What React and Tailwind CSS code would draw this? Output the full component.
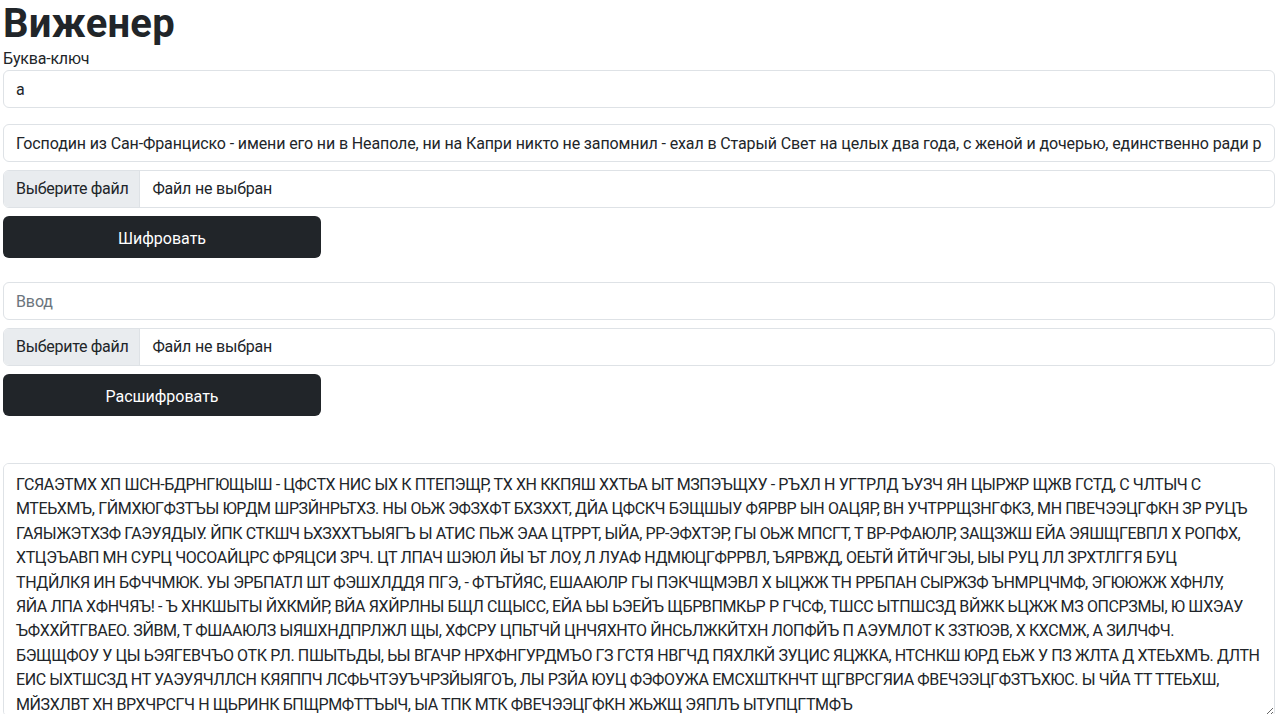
const plain =
  "Господин из Сан-Франциско - имени его ни в Неаполе, ни на Капри никто не запомнил - ехал в Старый Свет на целых два года, с женой и дочерью, единственно ради развлечения.";

const cipher =
  "ГСЯАЭТМХ ХП ШСН-БДРНГЮЩЫШ - ЦФСТХ НИС ЫХ К ПТЕПЭЩР, ТХ ХН ККПЯШ ХХТЬА ЫТ МЗПЭЪЩХУ - РЪХЛ Н УГТРЛД ЪУЗЧ ЯН ЦЫРЖР ЩЖВ ГСТД, С ЧЛТЫЧ С " +
  "МТЕЬХМЪ, ГЙМХЮГФЗТЪЫ ЮРДМ ШРЗЙНРЬТХЗ. НЫ ОЬЖ ЭФЗХФТ БХЗХХТ, ДЙА ЦФСКЧ БЭЩШЫУ ФЯРВР ЫН ОАЦЯР, ВН УЧТРРЩЗНГФКЗ, МН ПВЕЧЭЭЦГФКН ЗР РУЦЪ " +
  "ГАЯЫЖЭТХЗФ ГАЭУЯДЫУ. ЙПК СТКШЧ ЬХЗХХТЪЫЯГЪ Ы АТИС ПЬЖ ЭАА ЦТРРТ, ЫЙА, РР-ЭФХТЭР, ГЫ ОЬЖ МПСГТ, Т ВР-РФАЮЛР, ЗАЩЗЖШ ЕЙА ЭЯШЩГЕВПЛ Х РОПФХ, " +
  "ХТЦЭЪАВП МН СУРЦ ЧОСОАЙЦРС ФРЯЦСИ ЗРЧ. ЦТ ЛПАЧ ШЭЮЛ ЙЫ ЪТ ЛОУ, Л ЛУАФ НДМЮЦГФРРВЛ, ЪЯРВЖД, ОЕЬТЙ ЙТЙЧГЭЫ, ЫЫ РУЦ ЛЛ ЗРХТЛГГЯ БУЦ\n" +
  "ТНДЙЛКЯ ИН БФЧЧМЮК. УЫ ЭРБПАТЛ ШТ ФЭШХЛДДЯ ПГЭ, - ФТЪТЙЯС, ЕШААЮЛР ГЫ ПЭКЧЩМЭВЛ Х ЫЦЖЖ ТН РРБПАН СЫРЖЗФ ЪНМРЦЧМФ, ЭГЮЮЖЖ ХФНЛУ,\n" +
  "ЯЙА ЛПА ХФНЧЯЪ! - Ъ ХНКШЫТЫ ЙХКМЙР, ВЙА ЯХЙРЛНЫ БЩЛ СЩЫСС, ЕЙА ЬЫ ЬЭЕЙЪ ЩБРВПМКЬР Р ГЧСФ, ТШСС ЫТПШСЗД ВЙЖК ЬЦЖЖ МЗ ОПСРЗМЫ, Ю ШХЭАУ " +
  "ЪФХХЙТГВАЕО. ЗЙВМ, Т ФШААЮЛЗ ЫЯШХНДПРЛЖЛ ЩЫ, ХФСРУ ЦПЬТЧЙ ЦНЧЯХНТО ЙНСЬЛЖКЙТХН ЛОПФЙЪ П АЭУМЛОТ К ЗЗТЮЭВ, Х КХСМЖ, А ЗИЛЧФЧ.\n" +
  "БЭЩЩФОУ У ЦЫ ЬЭЯГЕВЧЪО ОТК РЛ. ПШЫТЬДЫ, ЬЫ ВГАЧР НРХФНГУРДМЪО ГЗ ГСТЯ НВГЧД ПЯХЛКЙ ЗУЦИС ЯЦЖКА, НТСНКШ ЮРД ЕЬЖ У ПЗ ЖЛТА Д ХТЕЬХМЪ. ДЛТН " +
  "ЕИС ЫХТШСЗД НТ УАЭУЯЧЛЛСН КЯЯППЧ ЛСФЬЧТЭУЪЧРЗЙЫЯГОЪ, ЛЫ РЗЙА ЮУЦ ФЭФОУЖА ЕМСХШТКНЧТ ЩГВРСГЯИА ФВЕЧЭЭЦГФЗТЪХЮС. Ы ЧЙА ТТ ТТЕЬХШ,\n" +
  "МЙЗХЛВТ ХН ВРХЧРСГЧ Н ЩЬРИНК БПЩРМФТТЪЫЧ, ЫА ТПК МТК ФВЕЧЭЭЦГФКН ЖЬЖЩ ЭЯПЛЪ ЫТУПЦГТМФЪ";

function FileInput() {
  return (
    <div className="flex h-[38px] rounded-md border border-[#dee2e6] overflow-hidden bg-white">
      <div className="flex items-center pl-3 pr-[11px] bg-[#e9ecef] border-r border-[#dee2e6] tracking-[-0.3px]">Выберите файл</div>
      <div className="flex items-center px-3 tracking-[-0.2px]">Файл не выбран</div>
    </div>
  );
}

function TextInput({ value, placeholder }) {
  return (
    <input
      type="text"
      defaultValue={value}
      placeholder={placeholder}
      className="block w-full h-[38px] px-3 rounded-md border border-[#dee2e6] bg-white text-[#212529] tracking-[-0.12px] placeholder:text-[#6c757d] outline-none"
    />
  );
}

export default function App() {
  return (
    <div className="px-[3px] bg-white text-[#212529] text-base font-['Segoe_UI',Roboto,'Noto_Sans',sans-serif]">
      <h1 className="text-[40px] font-bold leading-[48px] tracking-[0.2px]">Виженер</h1>
      <label className="block leading-[22px] tracking-[-0.2px]">Буква-ключ</label>
      <TextInput value="а" />

      {/* Encrypt */}
      <div className="mt-4">
        <TextInput value={plain} />
      </div>
      <div className="mt-2">
        <FileInput />
      </div>
      <button className="mt-2 w-1/4 h-[42px] pt-1 rounded-md bg-[#212529] text-white">Шифровать</button>

      {/* Decrypt */}
      <div className="mt-6">
        <TextInput placeholder="Ввод" />
      </div>
      <div className="mt-2">
        <FileInput />
      </div>
      <button className="mt-2 w-1/4 h-[42px] pt-1 rounded-md bg-[#212529] text-white">Расшифровать</button>

      {/* Result */}
      <textarea
        readOnly
        defaultValue={cipher}
        className="block mt-[47px] w-full h-[254px] px-3 pt-[9px] pb-[6px] rounded-md border border-[#dee2e6] bg-white text-[#212529] leading-[24.4px] tracking-[-0.38px] outline-none"
      />
    </div>
  );
}
